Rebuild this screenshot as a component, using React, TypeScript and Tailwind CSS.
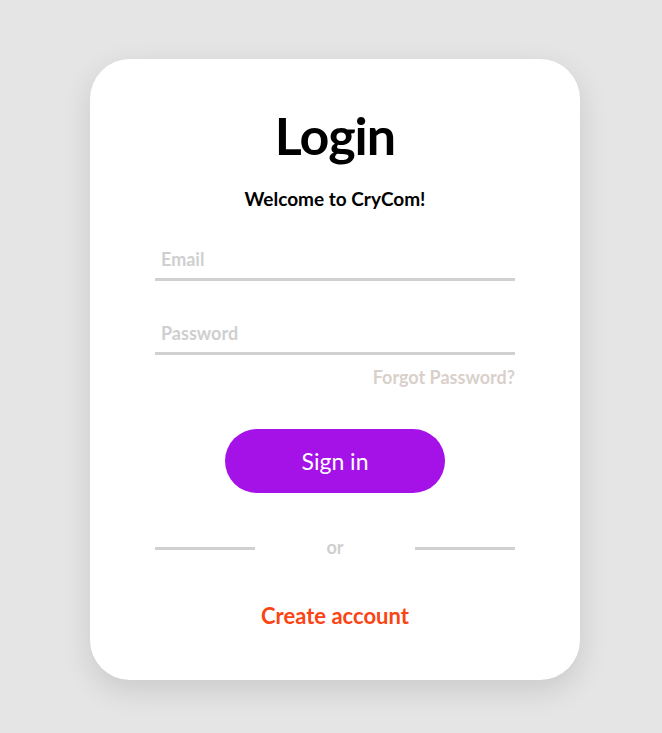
import React from "react";

export default function App() {
  return (
    <div
      className="min-h-[733px] w-full bg-[#e5e5e5] flex justify-center pt-[59px] pl-[8px]"
      style={{ fontFamily: "Lato, 'Open Sans', sans-serif" }}
    >
      <div className="w-[490px] h-[621px] bg-white rounded-[40px] shadow-[0_10px_30px_rgba(0,0,0,0.12)] flex flex-col items-center">
        <h1 className="mt-[44px] text-[52px] leading-[64px] font-bold text-black tracking-[-1px]">Login</h1>
        <p className="mt-[20px] text-[19px] leading-[24px] font-bold text-black">Welcome to CryCom!</p>
        <div className="mt-[30px] w-[360px] flex flex-col">
          <div className="border-b-[3px] border-[#d0d0d0] h-[40px] flex items-center px-[6px]">
            <span className="text-[18px] font-bold text-[#cfcfcf]">Email</span>
          </div>
          <div className="mt-[34px] border-b-[3px] border-[#d0d0d0] h-[40px] flex items-center px-[6px]">
            <span className="text-[18px] font-bold text-[#cfcfcf]">Password</span>
          </div>
          <div className="mt-[10px] text-right text-[18px] leading-[24px] font-bold text-[#d9d0cb]">Forgot Password?</div>
        </div>
        <button className="mt-[40px] w-[220px] h-[64px] rounded-full bg-[#a512e8] text-white text-[23px] flex items-center justify-center">
          Sign in
        </button>
        <div className="mt-[45px] w-[360px] flex items-center">
          <div className="w-[100px] h-[3px] bg-[#d0d0d0]" />
          <div className="flex-1 text-center text-[18px] font-bold text-[#cfcfcf] leading-[24px] -mt-[3px]">or</div>
          <div className="w-[100px] h-[3px] bg-[#d0d0d0]" />
        </div>
        <div className="mt-[43px] text-[22px] leading-[28px] font-bold text-[#fb4414]">Create account</div>
      </div>
    </div>
  );
}
